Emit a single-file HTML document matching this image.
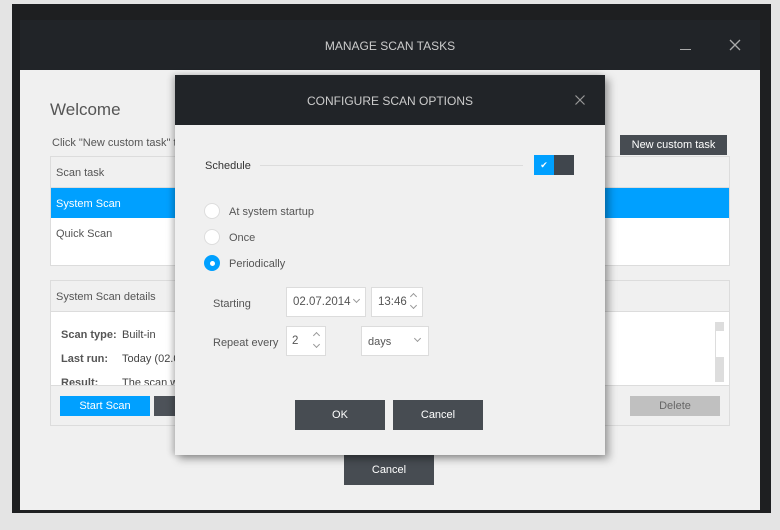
<!DOCTYPE html>
<html><head><meta charset="utf-8"><style>
*{margin:0;padding:0;box-sizing:border-box}
body{width:780px;height:530px;background:#e4e4e4;position:relative;overflow:hidden;font-family:"Liberation Sans",sans-serif;font-size:11px;color:#444}
.a{position:absolute}
.t{position:absolute;white-space:nowrap}
.btn{position:absolute;color:#fff;text-align:center;font-size:11px}
.chev{position:absolute;width:5px;height:5px;border-right:1px solid #999;border-bottom:1px solid #999;transform:rotate(45deg)}
.chevu{position:absolute;width:5px;height:5px;border-left:1px solid #999;border-top:1px solid #999;transform:rotate(45deg)}
.box{position:absolute;background:#fff;border:1px solid #dcdcdc}
.rad{position:absolute;width:16px;height:16px;border-radius:50%;background:#fff;border:1px solid #ddd}
</style></head><body>
<div class="a" style="left:12px;top:4px;width:759px;height:509px;background:#1e1f21"></div>
<div class="a" style="left:20px;top:20px;width:740px;height:50px;background:#212428"></div>
<div class="t" style="left:0;width:780px;text-align:center;top:39px;color:#ccc;font-size:12px;">MANAGE SCAN TASKS</div>
<div class="a" style="left:680px;top:49px;width:11px;height:1px;background:#aaa"></div>
<svg class="a" style="left:729px;top:39px" width="12" height="12"><path d="M1 1L11 11M11 1L1 11" stroke="#aaa" stroke-width="1.3"/></svg>
<div class="a" style="left:20px;top:70px;width:740px;height:440px;background:#f0f0f0"></div>
<div class="t" style="left:50px;top:100px;font-size:17px;color:#555">Welcome</div>
<div class="t" style="left:52px;top:137px;color:#555">Click "New custom task" to</div>
<div class="btn" style="left:620px;top:135px;width:107px;height:20px;line-height:21px;background:#474c52">New custom task</div>
<div class="a" style="left:50px;top:156px;width:680px;height:110px;border:1px solid #dcdcdc;background:#fff"></div>
<div class="a" style="left:51px;top:157px;width:678px;height:31px;background:#f0f0f0;border-bottom:1px solid #dcdcdc"></div>
<div class="t" style="left:56px;top:167px;color:#555">Scan task</div>
<div class="a" style="left:51px;top:188px;width:678px;height:30px;background:#00a0ff"></div>
<div class="t" style="left:56px;top:198px;color:#fff">System Scan</div>
<div class="t" style="left:56px;top:228px;color:#555">Quick Scan</div>
<div class="a" style="left:50px;top:280px;width:680px;height:146px;border:1px solid #dcdcdc;background:#f0f0f0"></div>
<div class="t" style="left:56px;top:291px;color:#555">System Scan details</div>
<div class="a" style="left:51px;top:311px;width:678px;height:75px;background:#fff;border-top:1px solid #dcdcdc;border-bottom:1px solid #dcdcdc;overflow:hidden">
<div class="t" style="left:10px;top:17px;font-weight:bold;color:#555">Scan type:</div><div class="t" style="left:71px;top:17px">Built-in</div>
<div class="t" style="left:10px;top:41px;font-weight:bold;color:#555">Last run:</div><div class="t" style="left:71px;top:41px">Today (02.07.2014)</div>
<div class="t" style="left:10px;top:65px;font-weight:bold;color:#555">Result:</div><div class="t" style="left:71px;top:65px">The scan was</div>
</div>
<div class="a" style="left:715px;top:322px;width:9px;height:60px;background:#ddd"></div>
<div class="a" style="left:716px;top:331px;width:8px;height:26px;background:#fff"></div>
<div class="btn" style="left:60px;top:396px;width:90px;height:20px;line-height:21px;background:#00a0ff">Start Scan</div>
<div class="btn" style="left:154px;top:396px;width:90px;height:20px;line-height:21px;background:#4d5259">Stop</div>
<div class="btn" style="left:630px;top:396px;width:90px;height:20px;line-height:21px;background:#c0c0c0;color:#666">Delete</div>
<div class="btn" style="left:344px;top:455px;width:90px;height:30px;line-height:31px;background:#474c52">Cancel</div>
<!-- dialog -->
<div class="a" style="left:175px;top:75px;width:430px;height:380px;background:#f0f0f0;box-shadow:4px 4px 8px rgba(0,0,0,.35),-3px 0 6px rgba(0,0,0,.2)"></div>
<div class="a" style="left:175px;top:75px;width:430px;height:50px;background:#212428"></div>
<div class="t" style="left:175px;width:430px;text-align:center;top:94px;color:#ccc;font-size:12px">CONFIGURE SCAN OPTIONS</div>
<svg class="a" style="left:575px;top:95px" width="10" height="10"><path d="M0.5 0.5L9.5 9.5M9.5 0.5L0.5 9.5" stroke="#999" stroke-width="1.2"/></svg>
<div class="t" style="left:205px;top:160px;color:#333">Schedule</div>
<div class="a" style="left:260px;top:165px;width:263px;height:1px;background:#dcdcdc"></div>
<div class="a" style="left:534px;top:155px;width:20px;height:20px;background:#00a0ff;color:#fff;font-size:9px;text-align:center;line-height:20px">✔</div>
<div class="a" style="left:554px;top:155px;width:20px;height:20px;background:#40464d"></div>
<div class="rad" style="left:204px;top:203px"></div><div class="t" style="left:229px;top:206px;color:#555">At system startup</div>
<div class="rad" style="left:204px;top:229px"></div><div class="t" style="left:229px;top:232px;color:#555">Once</div>
<div class="rad" style="left:204px;top:255px;background:#00a0ff;border-color:#00a0ff"></div><div class="a" style="left:210px;top:261px;width:5px;height:5px;border-radius:50%;background:#fff"></div>
<div class="t" style="left:229px;top:258px;color:#555">Periodically</div>
<div class="t" style="left:213px;top:298px;color:#555">Starting</div>
<div class="box" style="left:286px;top:287px;width:80px;height:30px"></div><div class="t" style="left:293px;top:296px;color:#555;font-size:11.5px">02.07.2014</div><div class="chev" style="left:354px;top:297px"></div>
<div class="box" style="left:371px;top:287px;width:52px;height:30px"></div><div class="t" style="left:378px;top:296px;color:#555;font-size:11.5px">13:46</div><div class="chevu" style="left:411px;top:294px"></div><div class="chev" style="left:411px;top:303px"></div>
<div class="t" style="left:213px;top:337px;color:#555">Repeat every</div>
<div class="box" style="left:286px;top:326px;width:40px;height:30px"></div><div class="t" style="left:292px;top:335px;color:#555;font-size:11.5px">2</div><div class="chevu" style="left:314px;top:333px"></div><div class="chev" style="left:314px;top:342px"></div>
<div class="box" style="left:361px;top:326px;width:68px;height:30px"></div><div class="t" style="left:368px;top:336px;color:#555">days</div><div class="chev" style="left:415px;top:336px"></div>
<div class="btn" style="left:295px;top:400px;width:90px;height:30px;line-height:31px;background:#474c52">OK</div>
<div class="btn" style="left:393px;top:400px;width:90px;height:30px;line-height:31px;background:#474c52">Cancel</div>
</body></html>
